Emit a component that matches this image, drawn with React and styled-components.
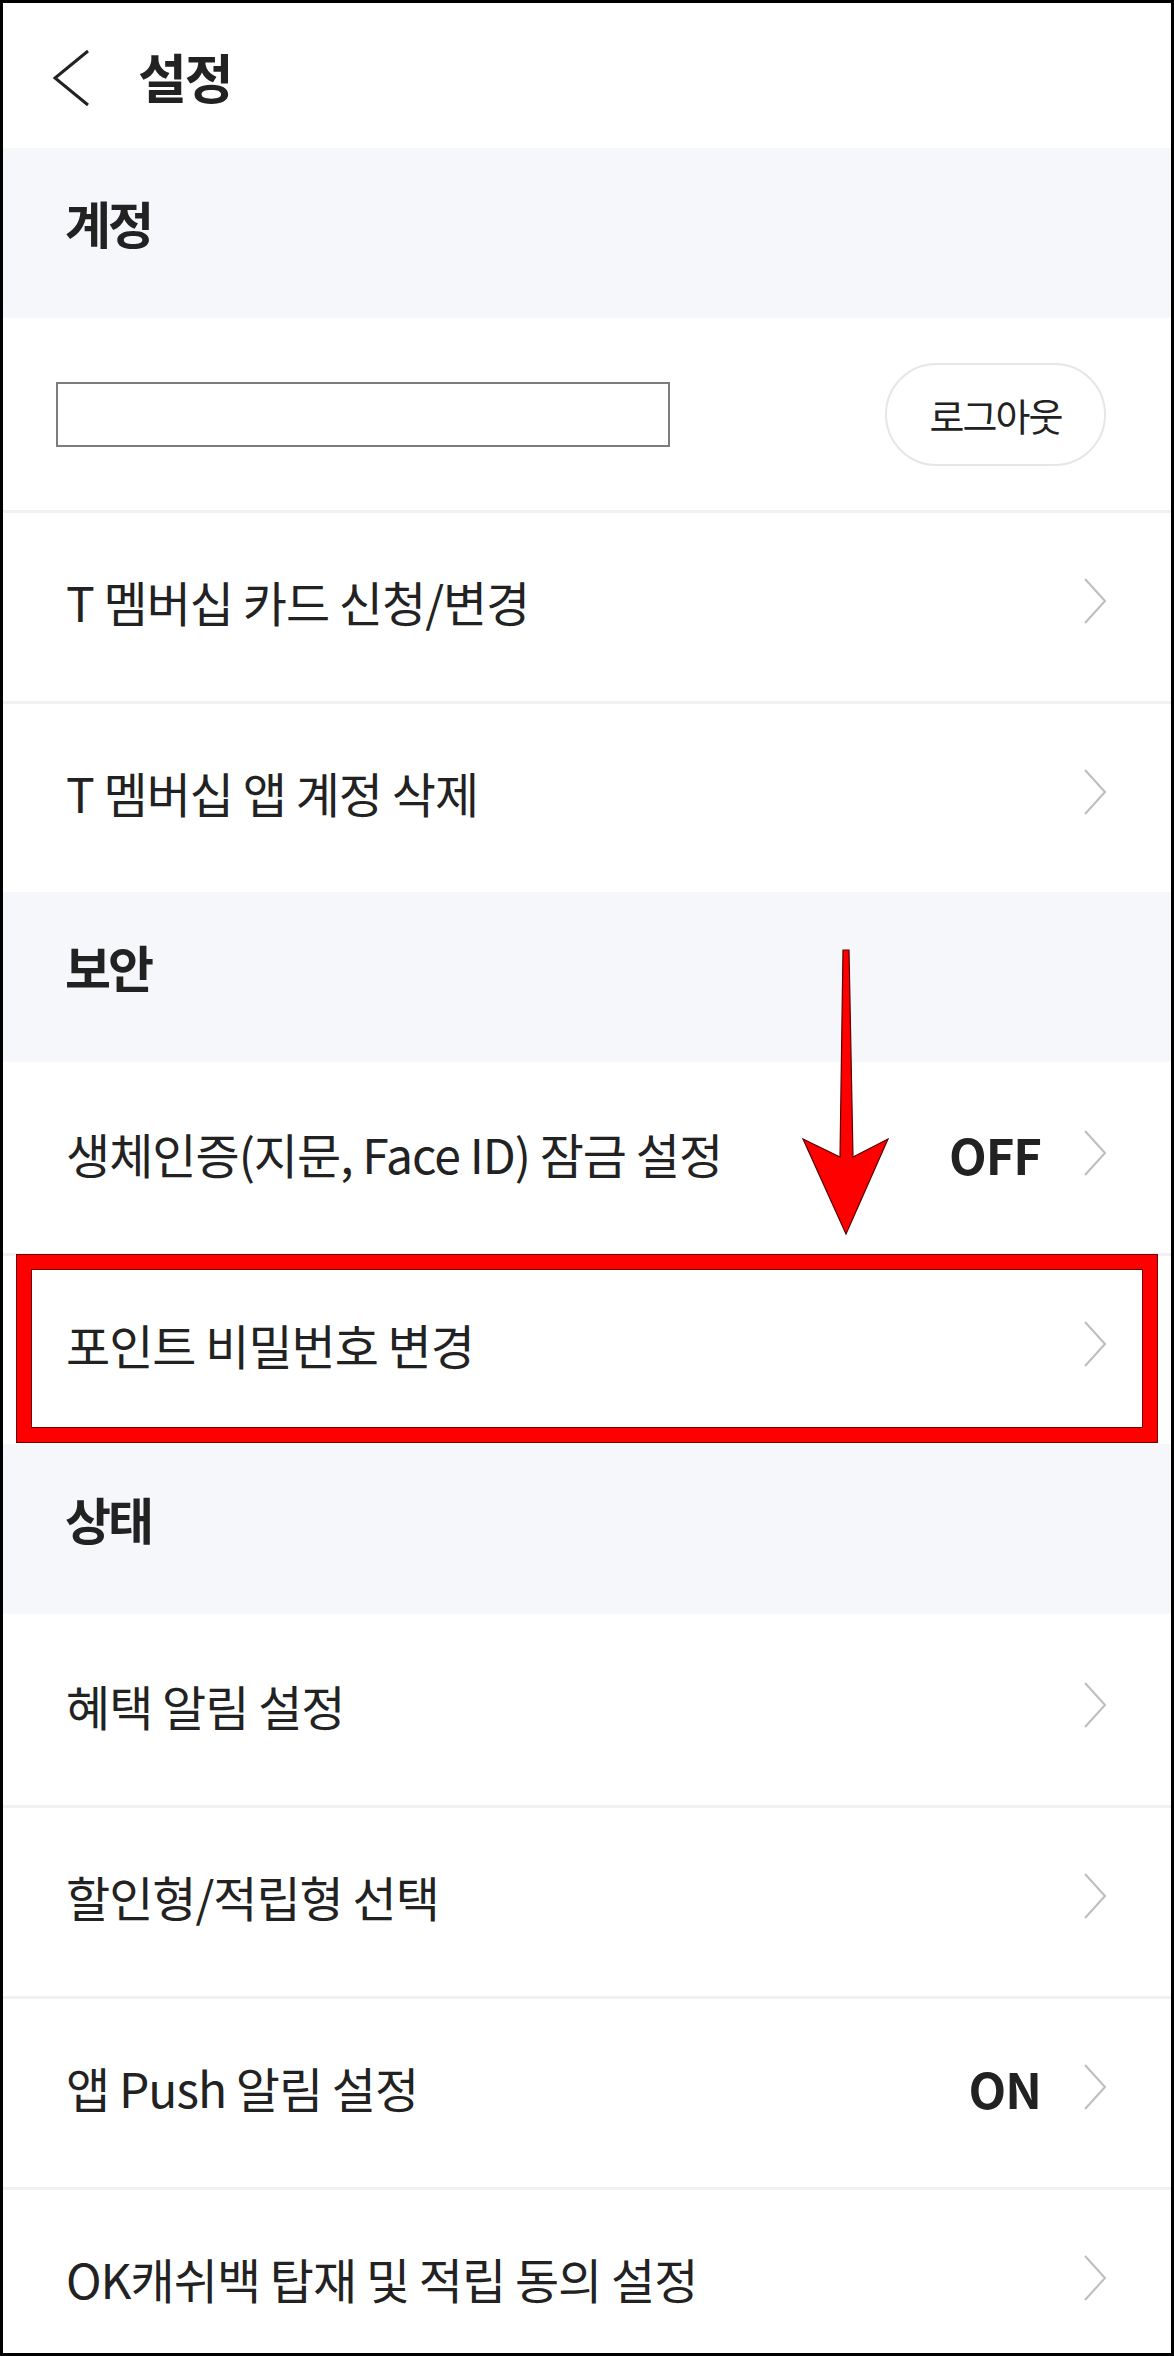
import React from "react";
import styled, { createGlobalStyle } from "styled-components";

const sections = [
  {
    title: "계정",
    account: true,
    rows: [{ label: "T 멤버십 카드 신청/변경" }, { label: "T 멤버십 앱 계정 삭제" }],
  },
  {
    title: "보안",
    rows: [
      { label: "생체인증(지문, Face ID) 잠금 설정", value: "OFF" },
      { label: "포인트 비밀번호 변경", highlight: true },
    ],
  },
  {
    title: "상태",
    rows: [
      { label: "혜택 알림 설정" },
      { label: "할인형/적립형 선택" },
      { label: "앱 Push 알림 설정", value: "ON" },
      { label: "OK캐쉬백 탑재 및 적립 동의 설정" },
    ],
  },
];

const GlobalStyle = createGlobalStyle`
  body {
    margin: 0;
    background: #fff;
    font-family: "Noto Sans CJK KR", "Noto Sans", sans-serif;
    color: #222;
  }
  * { box-sizing: border-box; }
`;

const Page = () => {
  return (
    <>
      <GlobalStyle />
      <Frame>
        <Header>
          <BackButton>
            <svg width="38" height="58" viewBox="0 0 38 58">
              <polyline points="36,2 3,29 36,56" fill="none" stroke="#222" strokeWidth="3" />
            </svg>
          </BackButton>
          <Title>설정</Title>
        </Header>

        {sections.map((section) => (
          <React.Fragment key={section.title}>
            <Band>
              <BandTitle>{section.title}</BandTitle>
            </Band>
            {section.account && (
              <AccountRow>
                <AccountField />
                <LogoutButton>로그아웃</LogoutButton>
              </AccountRow>
            )}
            {section.rows.map((row, i) => (
              <Row key={row.label} $first={i === 0 && !section.account} $highlight={row.highlight}>
                <Label>{row.label}</Label>
                <Right>
                  {row.value && <Value>{row.value}</Value>}
                  <svg width="24" height="46" viewBox="0 0 24 46">
                    <polyline points="2,1 22,23 2,45" fill="none" stroke="#bdbdbd" strokeWidth="2" />
                  </svg>
                </Right>
              </Row>
            ))}
          </React.Fragment>
        ))}

        {/* annotation arrow */}
        <Arrow width="92" height="295" viewBox="0 0 92 295">
          <polygon
            points="43,5 49,5 53,212 88,194 46,289 3,194 40,212"
            fill="#ff0000"
            stroke="#5a0000"
            strokeWidth="1.2"
          />
        </Arrow>
      </Frame>
    </>
  );
};

export default Page;

const Frame = styled.div`
  position: relative;
  width: 1174px;
  height: 2356px;
  border: 3px solid #000;
  overflow: hidden;
  background: #fff;
`;

const Header = styled.div`
  display: flex;
  align-items: center;
  gap: 48px;
  height: 145px;
  padding-left: 49px;
`;

const BackButton = styled.div`
  display: flex;
  width: 38px;
  height: 58px;
  margin-top: 4px;
`;

const Title = styled.h1`
  margin: 0;
  font-size: 53px;
  font-weight: 700;
  letter-spacing: -2px;
  color: #222;
`;

const Band = styled.div`
  display: flex;
  align-items: center;
  height: 170px;
  padding: 0 0 22px 62px;
  background: #f6f7fa;
`;

const BandTitle = styled.h2`
  margin: 0;
  font-size: 50px;
  font-weight: 700;
  letter-spacing: -3px;
  color: #222;
`;

const AccountRow = styled.div`
  display: flex;
  align-items: center;
  justify-content: space-between;
  height: 192px;
  padding: 0 65px 0 53px;
`;

const AccountField = styled.div`
  width: 614px;
  height: 65px;
  border: 2px solid #7d7d7d;
  background: #fff;
`;

const LogoutButton = styled.button`
  width: 221px;
  height: 103px;
  border: 2px solid #e6e6e6;
  border-radius: 52px;
  background: #fff;
  font-family: "Noto Sans CJK KR", sans-serif;
  font-size: 38px;
  letter-spacing: -2px;
  color: #222;
  padding: 0;
`;

const Row = styled.div`
  position: relative;
  display: flex;
  align-items: center;
  justify-content: space-between;
  height: 191px;
  padding: 0 64px 12px 63px;
  border-top: 3px solid ${(p) => (p.$first ? "transparent" : "#f1f1f1")};

  ${(p) =>
    p.$highlight &&
    `
    &::after {
      content: "";
      position: absolute;
      top: -1px;
      bottom: 2px;
      left: 14px;
      right: 14px;
      border: 14px solid #ff0000;
      box-shadow: 0 0 0 1px #700000, inset 0 0 0 1px #700000;
      pointer-events: none;
    }
  `}
`;

const Label = styled.span`
  font-size: 48px;
  font-weight: 400;
  letter-spacing: -1px;
  color: #222;
`;

const Right = styled.div`
  display: flex;
  align-items: center;
  gap: 42px;
`;

const Value = styled.span`
  font-size: 49px;
  font-weight: 700;
  letter-spacing: -1px;
  color: #222;
`;

const Arrow = styled.svg`
  position: absolute;
  left: 797px;
  top: 942px;
`;
